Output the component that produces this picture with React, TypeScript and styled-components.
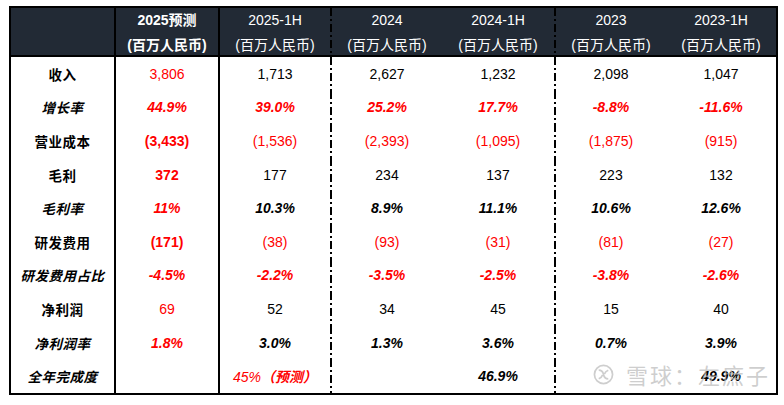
import styled, { createGlobalStyle } from 'styled-components';

const GlobalStyle = createGlobalStyle`
  html, body {
    margin: 0;
    padding: 0;
    background: #ffffff;
  }
  body {
    font-family: 'Liberation Sans', 'Noto Sans CJK SC', sans-serif;
    font-size: 14px;
    color: #000;
  }
`;

type Line = 'none' | 'solid' | 'dash';

const COLS = '103px 104px 112px 112px 112px 112px 110px';

/* 외곽 */
const Page = styled.div`
  padding: 6px 0 0 9px;
`;

const Table = styled.div`
  position: relative;
  width: 765px;
  border: 2px solid #000;
  display: flex;
  flex-direction: column;
`;

const HeadRow = styled.div`
  display: grid;
  grid-template-columns: ${COLS};
  height: 47px;
  background: #222a35;
  border-bottom: 2px solid #000;
`;

const Body = styled.div`
  display: grid;
  grid-template-rows: repeat(10, 1fr);
  height: 336px;
`;

const Row = styled.div`
  display: grid;
  grid-template-columns: ${COLS};
`;

const Cell = styled.div<{ $line?: Line }>`
  box-sizing: border-box;
  display: flex;
  flex-direction: column;
  align-items: center;
  justify-content: center;
  white-space: nowrap;
  border-left: ${(p) => (p.$line === 'solid' ? '2px solid #000' : 'none')};
  padding-left: ${(p) => (p.$line === 'dash' ? '2px' : '0')};
  background-image: ${(p) =>
    p.$line === 'dash'
      ? 'repeating-linear-gradient(to bottom, #000 0 8px, transparent 8px 11px, #000 11px 13px, transparent 13px 16px)'
      : 'none'};
  background-size: 2px 100%;
  background-repeat: no-repeat;
  background-position: left top;
`;

const HeadText = styled.div<{ $bold?: boolean }>`
  color: #ffffff;
  line-height: 25px;
  font-size: 14px;
  font-weight: ${(p) => (p.$bold ? 700 : 400)};
`;

const Label = styled.span<{ $italic?: boolean }>`
  font-weight: 700;
  font-size: 13.5px;
  font-style: ${(p) => (p.$italic ? 'italic' : 'normal')};
  letter-spacing: 0.5px;
`;

const Val = styled.span<{ $red?: boolean; $bold?: boolean; $italic?: boolean }>`
  color: ${(p) => (p.$red ? '#ff0000' : '#000')};
  font-weight: ${(p) => (p.$bold ? 700 : 400)};
  font-style: ${(p) => (p.$italic ? 'italic' : 'normal')};
`;

const Forecast = styled.span`
  color: #ff0000;
  font-style: italic;
  & b {
    font-weight: 700;
  }
`;

/* 水印 */
const Watermark = styled.div`
  position: absolute;
  left: 582px;
  bottom: 3px;
  display: flex;
  align-items: center;
  gap: 12px;
  color: rgba(185, 185, 185, 0.7);
  font-size: 22px;
  font-family: 'Noto Sans CJK SC', sans-serif;
  letter-spacing: 2px;
  pointer-events: none;
`;

const LINES: Line[] = ['none', 'solid', 'solid', 'dash', 'none', 'dash', 'none'];

type V = { t: string; red?: boolean; bold?: boolean; italic?: boolean };

const heads = ['2025-1H', '2024', '2024-1H', '2023', '2023-1H'];

const r = (t: string, red = true, bold = false, italic = false): V => ({ t, red, bold, italic });
const k = (t: string, bold = false, italic = false): V => ({ t, red: false, bold, italic });

const rows: { label: string; italic?: boolean; vals: V[] }[] = [
  { label: '收入', vals: [r('3,806'), k('1,713'), k('2,627'), k('1,232'), k('2,098'), k('1,047')] },
  {
    label: '增长率',
    italic: true,
    vals: ['44.9%', '39.0%', '25.2%', '17.7%', '-8.8%', '-11.6%'].map((t) => r(t, true, true, true)),
  },
  {
    label: '营业成本',
    vals: [r('(3,433)', true, true), r('(1,536)'), r('(2,393)'), r('(1,095)'), r('(1,875)'), r('(915)')],
  },
  { label: '毛利', vals: [r('372', true, true), k('177'), k('234'), k('137'), k('223'), k('132')] },
  {
    label: '毛利率',
    italic: true,
    vals: [
      r('11%', true, true, true),
      ...['10.3%', '8.9%', '11.1%', '10.6%', '12.6%'].map((t) => k(t, true, true)),
    ],
  },
  {
    label: '研发费用',
    vals: [r('(171)', true, true), r('(38)'), r('(93)'), r('(31)'), r('(81)'), r('(27)')],
  },
  {
    label: '研发费用占比',
    italic: true,
    vals: ['-4.5%', '-2.2%', '-3.5%', '-2.5%', '-3.8%', '-2.6%'].map((t) => r(t, true, true, true)),
  },
  { label: '净利润', vals: [r('69'), k('52'), k('34'), k('45'), k('15'), k('40')] },
  {
    label: '净利润率',
    italic: true,
    vals: [
      r('1.8%', true, true, true),
      ...['3.0%', '1.3%', '3.6%', '0.7%', '3.9%'].map((t) => k(t, true, true)),
    ],
  },
];

function XueqiuLogo() {
  return (
    <svg width="21" height="21" viewBox="0 0 22 22" fill="none" stroke="currentColor" strokeWidth="1.8">
      <circle cx="11" cy="11" r="9.5" />
      <path d="M6 6.5c3 0 4.5 2 5 4.5s2 4.5 5 4.5" />
      <path d="M6 15.5c2.5-1 3.5-2.5 4-4" />
      <path d="M16 6.5c-2.5 1-3.5 2.5-4 4" />
    </svg>
  );
}

export default function App() {
  return (
    <Page>
      <GlobalStyle />
      <Table>
        <HeadRow>
          <Cell $line="none" />
          <Cell $line="solid">
            <HeadText $bold>2025预测</HeadText>
            <HeadText $bold>(百万人民币)</HeadText>
          </Cell>
          {heads.map((h, i) => (
            <Cell key={h} $line={LINES[i + 2]}>
              <HeadText>{h}</HeadText>
              <HeadText>(百万人民币)</HeadText>
            </Cell>
          ))}
        </HeadRow>
        <Body>
          {rows.map((row) => (
            <Row key={row.label}>
              <Cell $line="none">
                <Label $italic={row.italic}>{row.label}</Label>
              </Cell>
              {row.vals.map((v, i) => (
                <Cell key={i} $line={LINES[i + 1]}>
                  <Val $red={v.red} $bold={v.bold} $italic={v.italic}>
                    {v.t}
                  </Val>
                </Cell>
              ))}
            </Row>
          ))}
          <Row>
            <Cell $line="none">
              <Label $italic>全年完成度</Label>
            </Cell>
            <Cell $line="solid" />
            <Cell $line="solid">
              <Forecast>
                45%<b>（预测）</b>
              </Forecast>
            </Cell>
            <Cell $line="dash" />
            <Cell $line="none">
              <Val $bold $italic>46.9%</Val>
            </Cell>
            <Cell $line="dash" />
            <Cell $line="none">
              <Val $bold $italic>49.9%</Val>
            </Cell>
          </Row>
        </Body>
        <Watermark>
          <XueqiuLogo />
          <span>雪球：左庶子</span>
        </Watermark>
      </Table>
    </Page>
  );
}
